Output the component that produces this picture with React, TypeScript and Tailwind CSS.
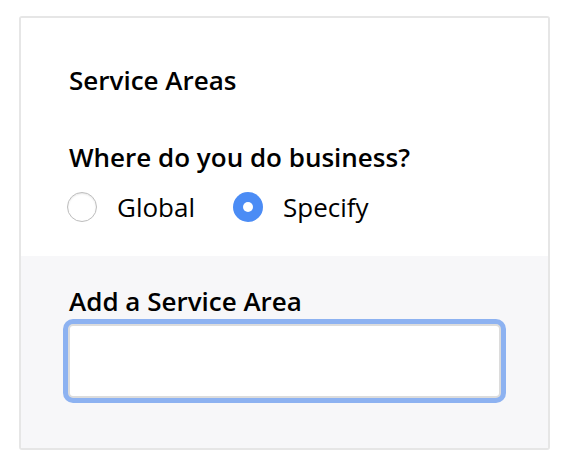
import { useState } from "react";

type Scope = "global" | "specify";

function Radio({ checked, label, onClick }: { checked: boolean; label: string; onClick: () => void }) {
    return (
        <button type="button" onClick={onClick} className="flex h-[36px] items-center gap-[20px]">
            {checked ? (
                <span className="flex h-[30px] w-[30px] items-center justify-center rounded-full bg-[#4b8cf5]">
                    <span className="h-[10px] w-[10px] rounded-full bg-white" />
                </span>
            ) : (
                <span className="h-[30px] w-[30px] rounded-full border border-[#bdbdbd] bg-white shadow-[inset_0_1px_2px_rgba(0,0,0,0.1)]" />
            )}
            <span className="text-[26px] leading-[36px] text-black">{label}</span>
        </button>
    );
}

export default function App() {
    const [scope, setScope] = useState<Scope>("specify");

    return (
        <div className="min-h-screen bg-white pl-[19px] pt-[16px] font-['Open_Sans',sans-serif]">
            <div className="w-[531px] overflow-hidden rounded-[3px] border-2 border-[#e6e6e6]">
                <div className="bg-white pl-[48px] pr-[20px] pt-[44px] pb-[31px]">
                    <h2 className="text-[26px] font-semibold leading-[36px] text-black">Service Areas</h2>
                    <p className="mt-[41px] text-[26px] font-semibold leading-[36px] text-black">Where do you do business?</p>
                    <div className="mt-[14px] -ml-[2px] flex items-center gap-[38px]">
                        <Radio checked={scope === "global"} label="Global" onClick={() => setScope("global")} />
                        <Radio checked={scope === "specify"} label="Specify" onClick={() => setScope("specify")} />
                    </div>
                </div>
                <div className="bg-[#f7f7f9] pl-[48px] pr-[20px] pt-[27px] pb-[50px]">
                    <p className="text-[26px] font-semibold leading-[36px] text-black">Add a Service Area</p>
                    <input
                        type="text"
                        className="mt-[5px] -ml-[1px] block h-[74px] w-[433px] rounded-[5px] border-2 border-[#dcdcdc] bg-white outline-none shadow-[0_0_0_5px_#8db2f1]"
                    />
                </div>
            </div>
        </div>
    );
}
